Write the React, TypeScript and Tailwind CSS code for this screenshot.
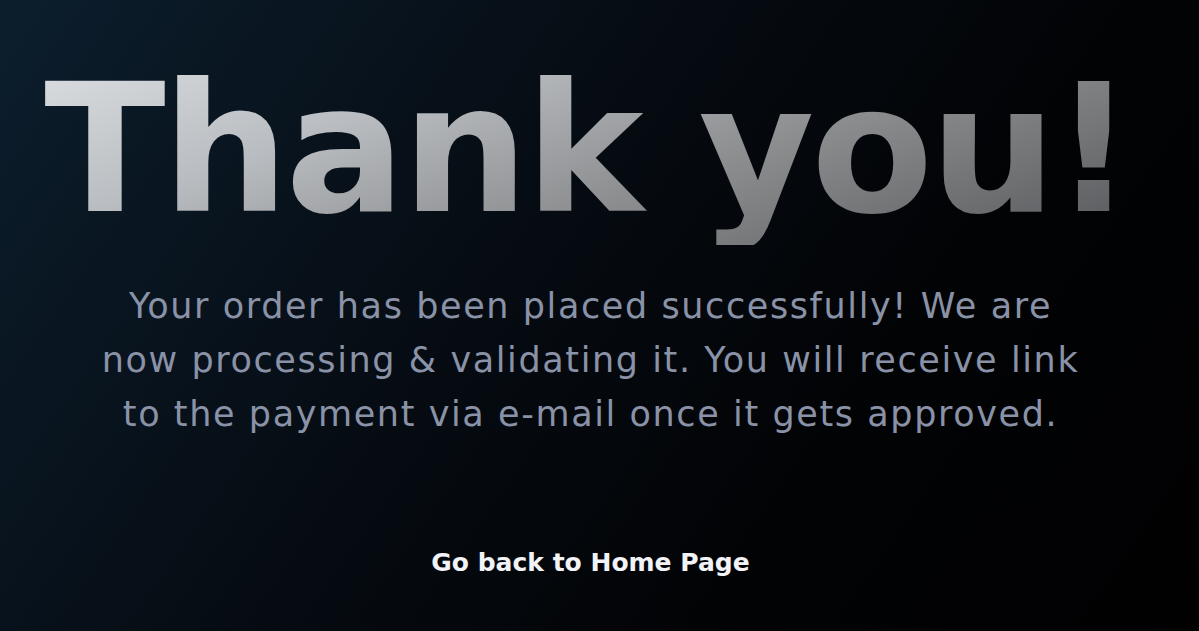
import React from 'react';

const App: React.FC = () => {
  return (
    <div className="w-full h-[631px] overflow-hidden bg-[linear-gradient(125deg,#0c1e2d_0%,#060c13_40%,#020305_70%,#010102_100%)] font-['DejaVu_Sans',sans-serif]">
      <div className="flex flex-col items-center pt-[55px] pr-[18px]">
        {/* heading */}
        <h1 className="mr-[6px] text-[178px] leading-[190px] font-bold tracking-[-3.5px] text-transparent bg-clip-text bg-[linear-gradient(160deg,#dcdfe2_0%,#b9bcc0_30%,#8c8e90_60%,#55575a_100%)]">
          Thank you!
        </h1>

        {/* message */}
        <p className="mt-[34px] text-center text-[35px] leading-[54px] tracking-[1.6px] text-[#8a92a7] whitespace-nowrap">
          Your order has been placed successfully! We are
          <br />
          now processing &amp; validating it. You will receive link
          <br />
          to the payment via e-mail once it gets approved.
        </p>

        <a href="#" className="mt-[103px] text-[25px] font-bold text-[#f1f3f6]">
          Go back to Home Page
        </a>
      </div>
    </div>
  );
};

export default App;
